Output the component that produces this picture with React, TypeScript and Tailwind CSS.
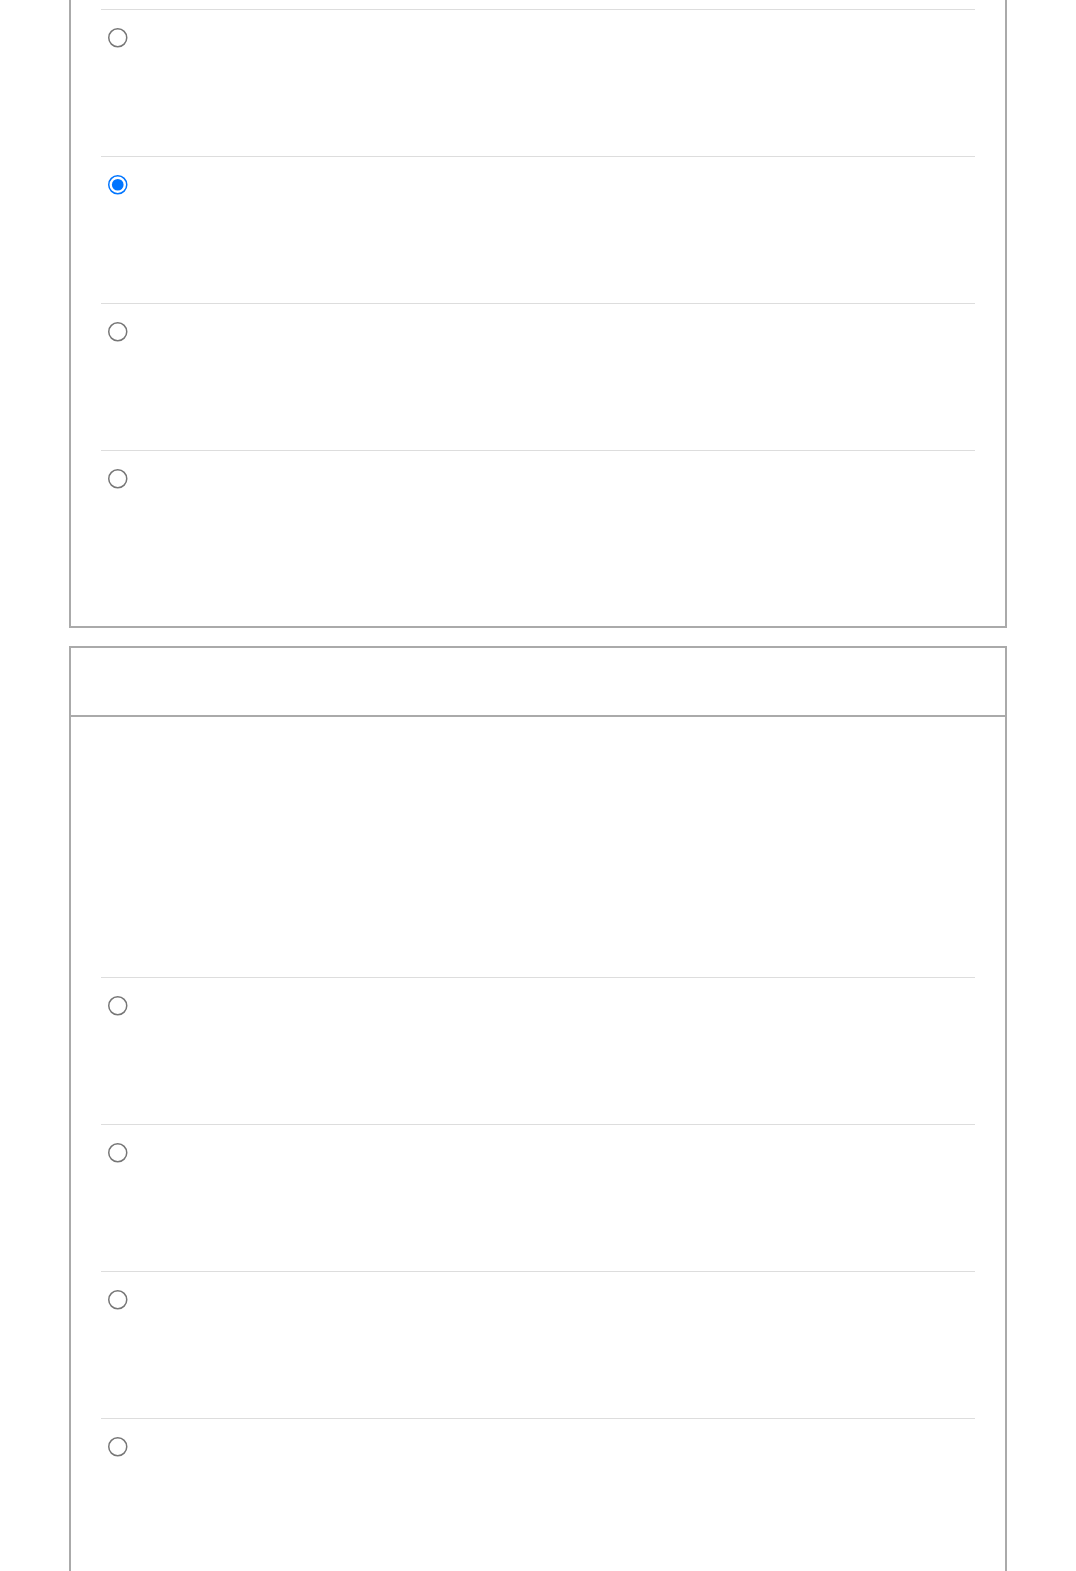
import React from "react";

function Row({ checked = false }: { checked?: boolean }) {
  return (
    <div className="h-[147px] border-t border-[#dddddd] pt-[18px]">
      <input
        type="radio"
        checked={checked}
        readOnly
        className="block m-0 ml-[7px] w-[13px] h-[13px] scale-150 origin-top-left"
      />
    </div>
  );
}

export default function App() {
  return (
    <div className="min-h-[1571px] bg-white font-['Liberation_Sans',sans-serif]">
      <div className="ml-[69px] w-[938px] border-x-2 border-b-2 border-[#aaaaaa] bg-white px-[30px] pt-[9px] pb-[29px]">
        <Row />
        <Row checked />
        <Row />
        <Row />
      </div>
      <div className="ml-[69px] mt-[18px] w-[938px] border-2 border-[#aaaaaa] bg-white">
        <div className="h-[69px] border-b-2 border-[#aaaaaa]" />
        <div className="px-[30px] pt-[260px] pb-[30px]">
          <Row />
          <Row />
          <Row />
          <Row />
        </div>
      </div>
    </div>
  );
}
